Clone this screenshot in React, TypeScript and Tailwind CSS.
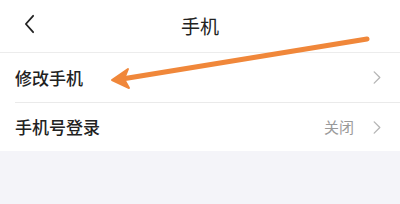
const font = { fontFamily: '"Noto Sans CJK SC", "Noto Sans", sans-serif' };

function Chevron({ className }: { className: string }) {
  return (
    <svg viewBox="0 0 10 16" className={className} fill="none" stroke="currentColor" strokeWidth="1.4" strokeLinecap="round" strokeLinejoin="round">
      <path d="M2 2l6 6-6 6" />
    </svg>
  );
}

export default function App() {
  return (
    <div className="relative h-[204px] w-[400px] overflow-hidden bg-[#f4f4f9]" style={font}>
      <div className="relative flex h-[53px] items-center justify-center border-b border-[#ececec] bg-white">
        <svg viewBox="0 0 12 22" className="absolute left-[24px] top-[14px] h-[20px] w-[11px] text-[#222]" fill="none" stroke="currentColor" strokeWidth="2" strokeLinecap="round" strokeLinejoin="round">
          <path d="M10 2L2 11l8 9" />
        </svg>
        <span className="text-[19px] text-[#222]">手机</span>
      </div>
      <div className="bg-white">
        <div className="flex h-[49px] items-center justify-between pl-[15px] pr-[18px]">
          <span className="text-[17px] font-medium text-[#222]">修改手机</span>
          <Chevron className="h-[15px] w-[10px] text-[#b5b5b5]" />
        </div>
        <div className="ml-[15px] h-px bg-[#eaeaea]" />
        <div className="flex h-[48px] items-center justify-between pl-[15px] pr-[18px]">
          <span className="text-[17px] font-medium text-[#222]">手机号登录</span>
          <div className="flex items-center gap-[18px]">
            <span className="text-[15px] text-[#9a9a9a]">关闭</span>
            <Chevron className="h-[15px] w-[10px] text-[#b5b5b5]" />
          </div>
        </div>
      </div>
      <svg className="absolute left-0 top-0 h-[204px] w-[400px]" viewBox="0 0 400 204" fill="none">
        <path d="M367 39L122 79" stroke="#f0873a" strokeWidth="5" strokeLinecap="round" />
        <path d="M112 80L128 69L124 79L129 88Z" fill="#f0873a" stroke="#f0873a" strokeWidth="2" strokeLinejoin="round" />
      </svg>
    </div>
  );
}
